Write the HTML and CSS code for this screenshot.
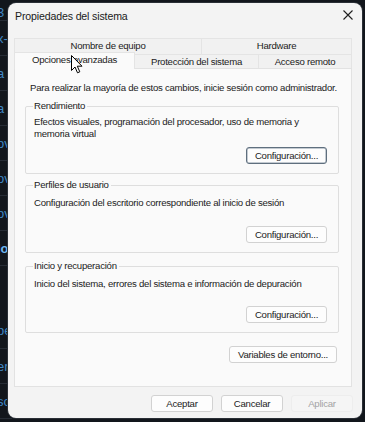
FILE: index.html
```html
<!DOCTYPE html>
<html lang="es">
<head>
<meta charset="utf-8">
<title>Propiedades del sistema</title>
<link rel="stylesheet" href="styles.css">
</head>
<body>
<div class="backdrop">
  <div class="bd-row r1"><span>3</span></div>
  <div class="bd-row"><span>x-</span></div>
  <div class="bd-row"><span>a</span></div>
  <div class="bd-row"><span>a</span></div>
  <div class="bd-row"><span>ov</span></div>
  <div class="bd-row"><span>ov</span></div>
  <div class="bd-row"><span>ov</span></div>
  <div class="bd-row strong"><span>lo</span></div>
  <div class="bd-row tall"><span>pe</span></div>
  <div class="bd-row"><span>er</span></div>
  <div class="bd-row"><span>so</span></div>
</div>

<div class="window">
  <div class="titlebar">
    <span class="title">Propiedades del sistema</span>
    <svg class="close" width="10" height="10" viewBox="0 0 10 10"><path d="M0.5 0.5 L9.5 9.5 M9.5 0.5 L0.5 9.5" stroke="#1f1f1f" stroke-width="1.1" fill="none"/></svg>
  </div>

  <div class="tabs">
    <div class="tab-row back">
      <div class="tab w1">Nombre de equipo</div>
      <div class="tab w2">Hardware</div>
    </div>
    <div class="tab-row front">
      <div class="tab sel w3">Opciones avanzadas</div>
      <div class="tab w4">Protección del sistema</div>
      <div class="tab w5">Acceso remoto</div>
    </div>
  </div>

  <div class="panel">
    <p class="intro">Para realizar la mayoría de estos cambios, inicie sesión como administrador.</p>

    <div class="group g1">
      <span class="legend">Rendimiento</span>
      <p class="desc">Efectos visuales, programación del procesador, uso de memoria y<br>memoria virtual</p>
      <div class="btn-line"><button class="btn cfg focus">Configuración...</button></div>
    </div>

    <div class="group g2">
      <span class="legend">Perfiles de usuario</span>
      <p class="desc">Configuración del escritorio correspondiente al inicio de sesión</p>
      <div class="btn-line"><button class="btn cfg">Configuración...</button></div>
    </div>

    <div class="group g3">
      <span class="legend">Inicio y recuperación</span>
      <p class="desc">Inicio del sistema, errores del sistema e información de depuración</p>
      <div class="btn-line"><button class="btn cfg">Configuración...</button></div>
    </div>

    <div class="env-line"><button class="btn env">Variables de entorno...</button></div>
  </div>

  <div class="footer">
    <button class="btn foot">Aceptar</button>
    <button class="btn foot">Cancelar</button>
    <button class="btn foot disabled">Aplicar</button>
  </div>

  <svg class="cursor" width="12" height="19" viewBox="0 0 12 19"><path d="M0.5 0.5 L0.5 15.5 L4 12 L6.5 17.8 L8.8 16.8 L6.3 11.2 L11 11.2 Z" fill="#ffffff" stroke="#000000" stroke-width="1" stroke-linejoin="round"/></svg>
</div>
</body>
</html>
```
FILE: styles.css
```css
* { box-sizing: border-box; }
html, body {
  margin: 0;
  padding: 0;
}
body {
  width: 365px;
  height: 422px;
  overflow: hidden;
  background: #12161c;
  position: relative;
  font-family: "Liberation Sans", Arial, sans-serif;
  font-size: 9.6px;
  letter-spacing: -0.25px;
  color: #1b1b1b;
}

/* background app strip */
.backdrop {
  display: flex;
  flex-direction: column;
  width: 12px;
  height: 422px;
  overflow: hidden;
}
.bd-row {
  height: 35px;
  display: flex;
  align-items: center;
  border-bottom: 1px solid #262c35;
  color: #3f86c4;
  font-size: 13px;
  letter-spacing: 0;
  white-space: nowrap;
  overflow: hidden;
}
.bd-row span { margin-left: -3px; }
.bd-row.r1 { height: 21px; align-items: flex-end; }
.bd-row.strong { color: #6fb6ee; font-weight: bold; }
.bd-row.tall { height: 83px; align-items: flex-end; padding-bottom: 10px; }

/* window */
.window {
  position: absolute;
  left: 8px;
  top: 3px;
  width: 354px;
  height: 415px;
  background: #f3f3f3;
  border-radius: 8px;
  box-shadow: 0 0 0 1px #2a2f36;
  display: flex;
  flex-direction: column;
}
.titlebar {
  height: 26px;
  display: flex;
  align-items: center;
  justify-content: space-between;
  padding: 0 9px 0 7px;
}
.title {
  font-size: 10.6px;
  letter-spacing: -0.15px;
  color: #1a1a1a;
}
.close { display: block; margin-top: -2px; }

.tabs {
  margin: 9px 10px 0 6px;
  display: flex;
  flex-direction: column;
}
.tab-row { display: flex; }
.tab {
  display: flex;
  align-items: center;
  justify-content: center;
  background: #f1f1f1;
  border: 1px solid #e4e4e4;
  color: #1b1b1b;
  white-space: nowrap;
}
.back .tab { height: 16px; border-bottom: none; padding-bottom: 3px; }
.back .w1 { width: 188px; }
.back .w2 { width: 150px; border-left: none; }
.front { height: 14px; align-items: flex-end; }
.front .tab { height: 14px; border-bottom: none; }
.front .w3 {
  width: 121px;
  margin-top: -2px;
  background: #fafafa;
  border-color: #e4e4e4;
  align-items: flex-start;
  padding-top: 1px;
  position: relative;
  z-index: 1;
  margin-bottom: -1px;
  height: 17px;
}
.front .w4 { width: 124px; border-left: none; }
.front .w5 { width: 93px; border-left: none; }

.panel {
  margin: 0 10px 0 6px;
  height: 319px;
  background: #fafafa;
  border: 1px solid #e2e2e2;
  padding: 0 12px 0 10px;
  display: flex;
  flex-direction: column;
}
.intro {
  margin: 13px 0 0 5px;
  line-height: 12px;
  white-space: nowrap;
}
.group {
  position: relative;
  border: 1px solid #dedede;
  border-radius: 2px;
  padding: 9px 11px 0 8px;
  display: flex;
  flex-direction: column;
}
.g1 { margin-top: 12px; height: 68px; }
.g2 { margin-top: 11px; height: 68px; }
.g3 { margin-top: 13px; height: 67px; }
.legend {
  position: absolute;
  left: 7px;
  top: -7px;
  padding: 0 2px 0 1px;
  background: #fafafa;
  line-height: 12px;
}
.desc {
  margin: 0;
  line-height: 12px;
}
.g2 .desc, .g3 .desc { margin-top: 2px; }
.btn-line {
  margin-top: auto;
  margin-bottom: 9px;
  display: flex;
  justify-content: flex-end;
}
.btn {
  font-family: inherit;
  font-size: 9.6px;
  letter-spacing: -0.25px;
  color: #1b1b1b;
  background: #fdfdfd;
  border: 1px solid #d2d2d2;
  border-radius: 3px;
  height: 17px;
  padding: 0;
  margin: 0;
  display: flex;
  align-items: center;
  justify-content: center;
}
.cfg { width: 81px; }
.cfg.focus { border-color: #5f6f7e; box-shadow: inset 0 0 0 0.5px #8a98a6; }
.env-line {
  margin-top: 13px;
  display: flex;
  justify-content: flex-end;
  padding-right: 2px;
}
.env { width: 108px; }

.footer {
  margin-top: 8px;
  display: flex;
  justify-content: flex-end;
  gap: 8px;
  padding-right: 9px;
}
.foot { width: 62px; }
.foot.disabled {
  background: #f5f5f5;
  border-color: #ededed;
  color: #a3a3a3;
}

.cursor {
  position: absolute;
  left: 63px;
  top: 52px;
  z-index: 5;
}
```
